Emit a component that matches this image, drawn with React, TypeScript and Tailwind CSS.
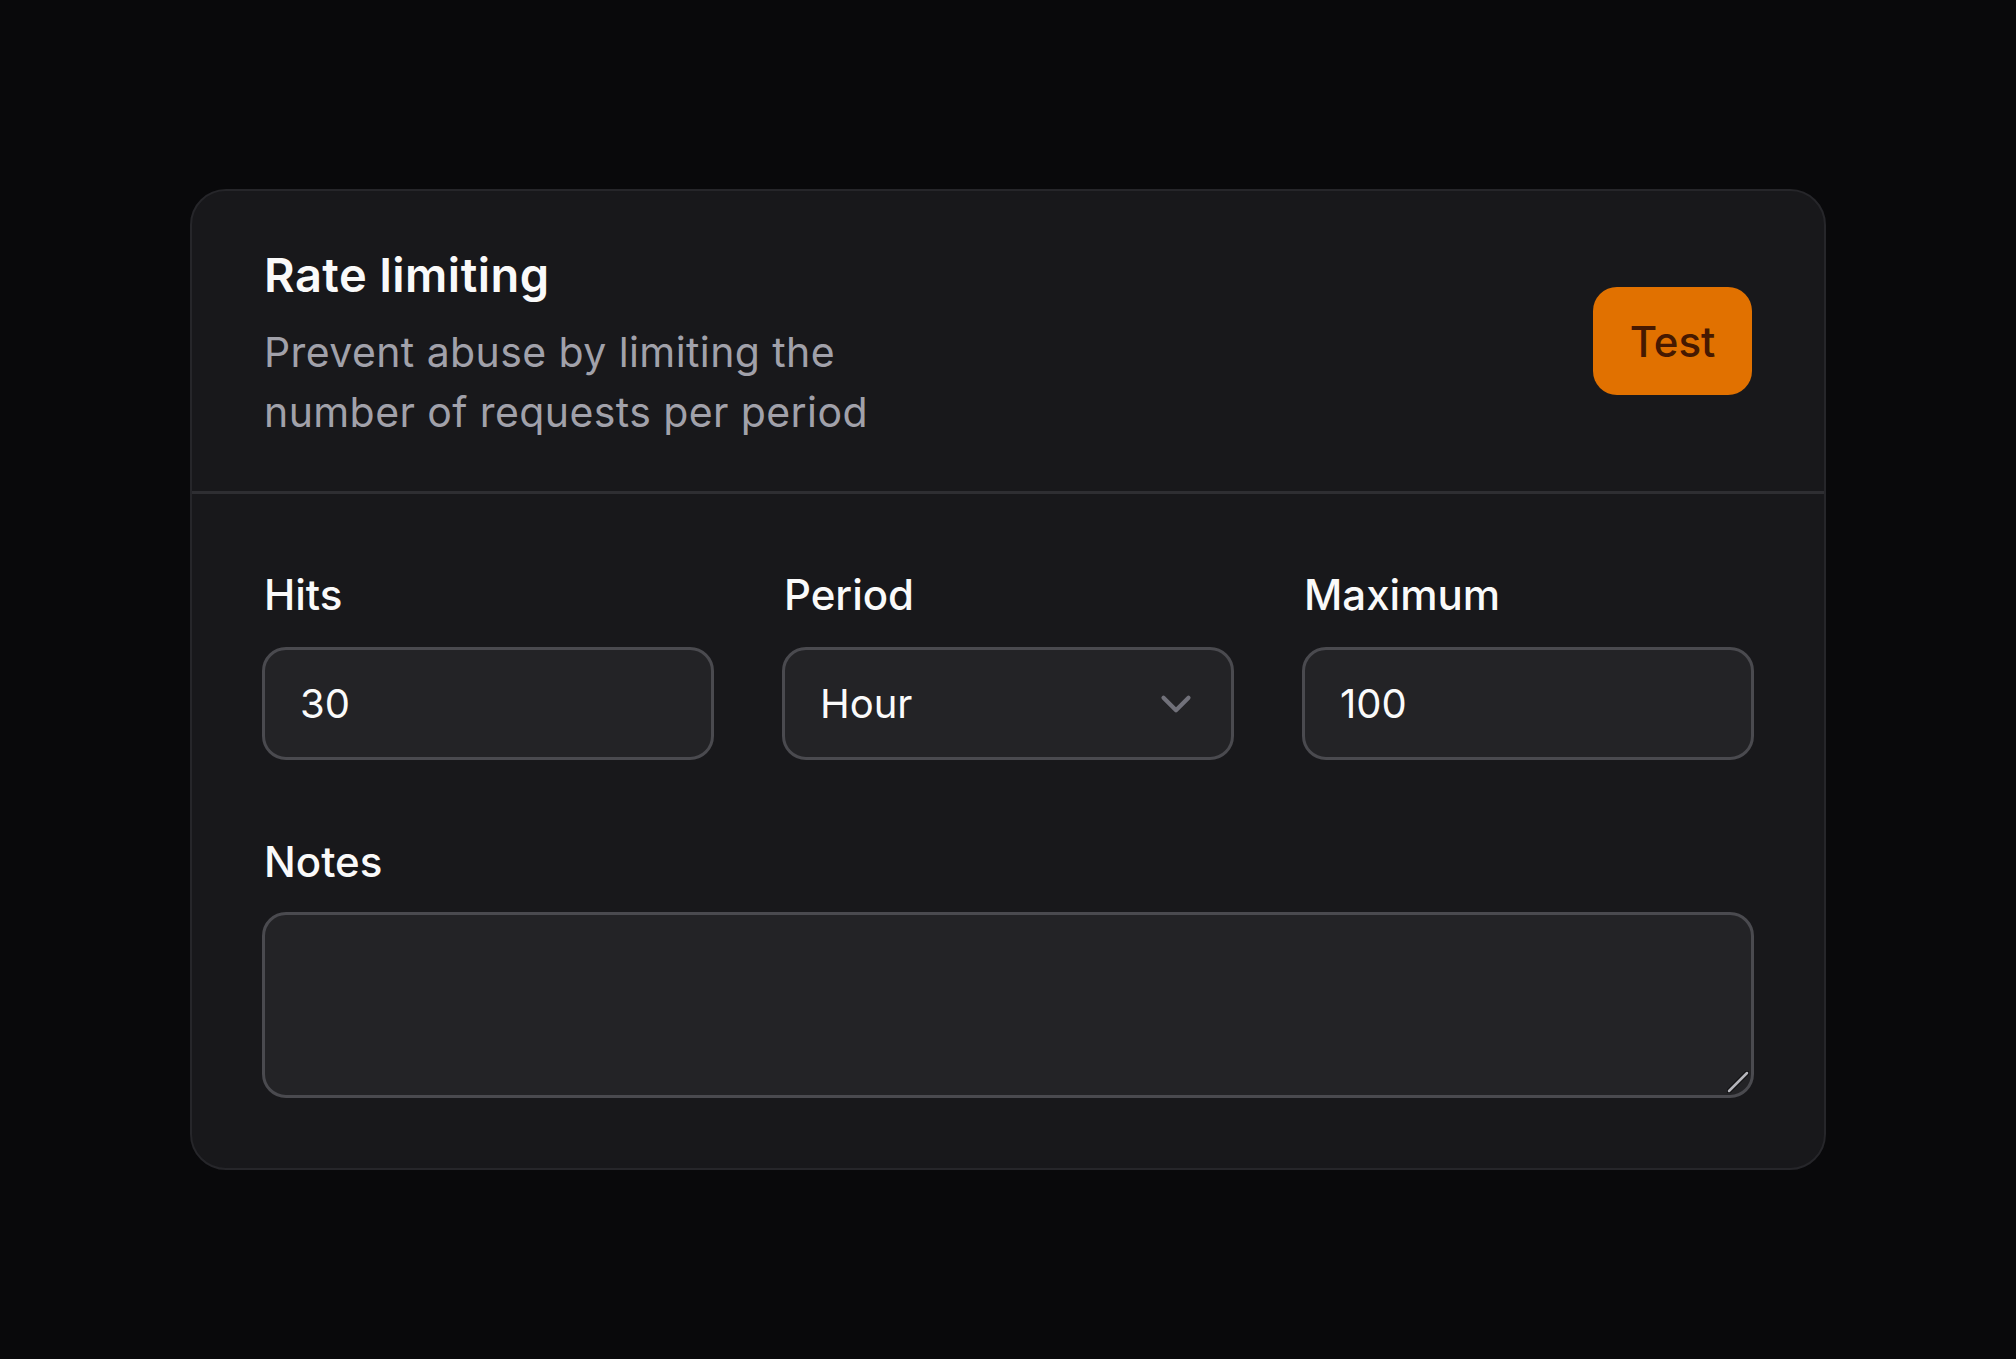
import { ChevronDown } from 'lucide-react'

export default function App() {
    return (
        <div className="flex justify-center items-center min-h-screen w-full bg-[#09090b] font-['Inter',sans-serif] [color-scheme:dark]">
            <div className="flex flex-col w-[1636px] rounded-[36px] border-2 border-[#26262a] bg-[#18181b]">
                <div className="flex justify-between items-center h-[303px] px-[72px] border-b-[3px] border-[#2e2e32]">
                    <div className="flex flex-col pt-[6px]">
                        <h1 className="text-[47px] leading-[56px] tracking-[0.01em] font-semibold text-[#fafafa]">Rate limiting</h1>
                        <p className="max-w-[660px] mt-[19px] text-[41px] leading-[60px] tracking-[0.01em] text-[#a1a1aa]">
                            Prevent abuse by limiting the number of requests per period
                        </p>
                    </div>
                    <button className="flex justify-center items-center w-[159px] h-[108px] rounded-[24px] bg-amber-600 text-[42px] font-medium text-amber-950">
                        Test
                    </button>
                </div>
                <div className="flex flex-col gap-[70px] px-[70px] pt-[69px] pb-[70px]">
                    <div className="grid grid-cols-3 gap-[68px]">
                        <div className="flex flex-col gap-[21px]">
                            <label className="pl-[2px] text-[42px] leading-[63px] font-medium text-[#fafafa]">Hits</label>
                            <input
                                defaultValue="30"
                                className="w-full h-[113px] pl-[35px] rounded-[24px] border-[3px] border-[#4a4a4f] bg-[#232326] text-[40px] text-[#fafafa] outline-none"
                            />
                        </div>
                        <div className="flex flex-col gap-[21px]">
                            <label className="pl-[2px] text-[42px] leading-[63px] font-medium text-[#fafafa]">Period</label>
                            <button className="flex justify-between items-center w-full h-[113px] pl-[35px] pr-[30px] rounded-[24px] border-[3px] border-[#4a4a4f] bg-[#232326] text-[40px] text-[#fafafa]">
                                <span>Hour</span>
                                <ChevronDown size={50} strokeWidth={2} className="text-[#71717a]" />
                            </button>
                        </div>
                        <div className="flex flex-col gap-[21px]">
                            <label className="pl-[2px] text-[42px] leading-[63px] font-medium text-[#fafafa]">Maximum</label>
                            <input
                                defaultValue="100"
                                className="w-full h-[113px] pl-[35px] rounded-[24px] border-[3px] border-[#4a4a4f] bg-[#232326] text-[40px] text-[#fafafa] outline-none"
                            />
                        </div>
                    </div>
                    <div className="flex flex-col gap-[19px]">
                        <label className="pl-[2px] text-[42px] leading-[63px] font-medium text-[#fafafa]">Notes</label>
                        <div className="relative">
                            <textarea className="block w-full h-[186px] px-[35px] py-[24px] rounded-[24px] border-[3px] border-[#4a4a4f] bg-[#232326] text-[40px] text-[#fafafa] outline-none resize-none" />
                            {/* resize grip */}
                            <svg className="absolute right-[5px] bottom-[5px] pointer-events-none" width="22" height="22" viewBox="0 0 22 22">
                                <line x1="2" y1="20" x2="20" y2="2" stroke="#111113" strokeWidth="5" strokeLinecap="round" />
                                <line x1="2" y1="20" x2="20" y2="2" stroke="#b4b4ba" strokeWidth="2.5" strokeLinecap="round" />
                            </svg>
                        </div>
                    </div>
                </div>
            </div>
        </div>
    )
}
